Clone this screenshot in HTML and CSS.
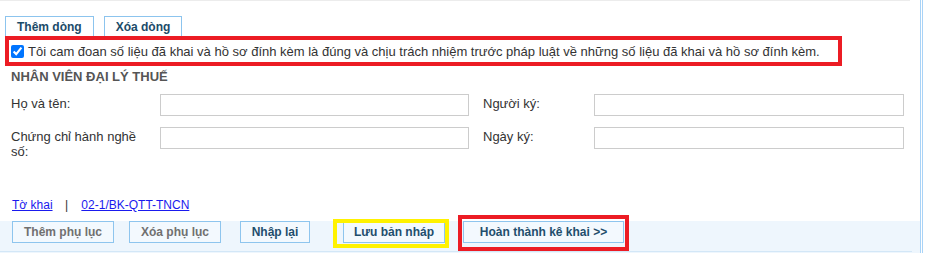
FILE: index.html
```html
<!DOCTYPE html>
<html lang="vi">
<head>
    <meta charset="UTF-8">
    <meta name="viewport" content="width=device-width, initial-scale=1.0">
    <title>Kê khai - Nhân viên đại lý thuế</title>
    <link rel="stylesheet" href="styles.css">
</head>
<body>
    <div class="page">
        <div class="top-rule"></div>

        <!-- Row tools -->
        <div class="tabs">
            <button class="tab">Thêm dòng</button>
            <button class="tab">Xóa dòng</button>
        </div>

        <!-- Pledge -->
        <label class="pledge">
            <input type="checkbox" checked>
            <span>Tôi cam đoan số liệu đã khai và hồ sơ đính kèm là đúng và chịu trách nhiệm trước pháp luật về những số liệu đã khai và hồ sơ đính kèm.</span>
        </label>

        <!-- Tax agent staff -->
        <h3 class="section-title">NHÂN VIÊN ĐẠI LÝ THUẾ</h3>
        <div class="agent-form">
            <label class="field-label">Họ và tên:</label>
            <input class="field-input" type="text">
            <label class="field-label right">Người ký:</label>
            <input class="field-input" type="text">
            <label class="field-label">Chứng chỉ hành nghề số:</label>
            <input class="field-input" type="text">
            <label class="field-label right">Ngày ký:</label>
            <input class="field-input" type="text">
        </div>

        <div class="links">
            <a href="#">Tờ khai</a>
            <span class="sep">|</span>
            <a href="#" class="current">02-1/BK-QTT-TNCN</a>
        </div>

        <!-- Actions -->
        <div class="actions">
            <button class="btn disabled btn-add">Thêm phụ lục</button>
            <button class="btn disabled btn-del">Xóa phụ lục</button>
            <button class="btn btn-reset">Nhập lại</button>
            <button class="btn btn-draft mark-yellow">Lưu bản nháp</button>
            <button class="btn btn-done mark-red">Hoàn thành kê khai &gt;&gt;</button>
        </div>
    </div>
</body>
</html>
```

FILE: styles.css
```css
body {
    margin: 0;
    font-family: "Liberation Sans", Arial, sans-serif;
    font-size: 13px;
    color: #333;
    background-color: #fff;
}
.page {
    width: 920px;
    height: 253px;
    border-right: 3px double #a9d3f7;
    overflow: hidden;
}
.top-rule {
    width: 910px;
    height: 1px;
    background-color: #ececec;
}
.tabs {
    display: flex;
    gap: 10px;
    margin-top: 15px;
    padding-left: 5px;
}
.tab {
    height: 20px;
    padding: 0 11px;
    border: 1px solid #8cc4ee;
    border-bottom: none;
    background-color: #fff;
    font-family: "Liberation Sans", Arial, sans-serif;
    font-size: 12px;
    font-weight: bold;
    color: #1b4b69;
}
.pledge {
    display: flex;
    align-items: center;
    box-sizing: border-box;
    width: 837px;
    height: 30px;
    margin-left: 5px;
    padding-left: 2px;
    border: 4px solid #ec1c24;
    color: #333;
}
.pledge input {
    width: 13px;
    height: 13px;
    margin: 0 4px 0 0;
}
.section-title {
    margin: 3px 0 0 11px;
    font-size: 13px;
    line-height: 16px;
    color: #555;
}
.agent-form {
    display: grid;
    grid-template-columns: 149px 309px 125px 310px;
    grid-auto-rows: 22px;
    row-gap: 11px;
    margin: 9px 0 0 11px;
}
.field-label {
    padding: 2px 8px 0 0;
    line-height: 15px;
    color: #333;
}
.field-label.right {
    padding-left: 14px;
}
.field-input {
    box-sizing: border-box;
    height: 22px;
    margin: 0;
    border: 1px solid #ccc;
    background-color: #fff;
}
.links {
    margin: 49px 0 0 12px;
    font-size: 12px;
    line-height: 14px;
}
.links a {
    color: #1a1aee;
}
.links .sep {
    margin: 0 10px 0 9px;
    color: #333;
}
.actions {
    display: flex;
    align-items: flex-start;
    height: 32px;
    margin-top: 9px;
    padding-left: 12px;
    background: linear-gradient(#d3e7f7, #d3e7f7) 0 30px / 912px 1px no-repeat, #eef6fd;
}
.btn {
    position: relative;
    height: 22px;
    padding: 0;
    border: 1px solid #8ec5ee;
    background-color: #f3f9fe;
    font-family: "Liberation Sans", Arial, sans-serif;
    font-size: 12px;
    font-weight: bold;
    color: #1f4e6d;
}
.btn.disabled {
    color: #707070;
}
.btn-add {
    width: 102px;
}
.btn-del {
    width: 92px;
    margin-left: 15px;
}
.btn-reset {
    width: 70px;
    margin-left: 19px;
}
.btn-draft {
    width: 102px;
    margin-left: 33px;
}
.btn-done {
    width: 161px;
    margin-left: 18px;
}
.mark-yellow::after,
.mark-red::after {
    content: "";
    position: absolute;
    border: 4px solid;
}
.mark-yellow::after {
    top: -3px;
    right: -5px;
    bottom: -6px;
    left: -11px;
    border-color: #fff200;
}
.mark-red::after {
    top: -7px;
    right: -6px;
    bottom: -9px;
    left: -6px;
    border-color: #ec1c24;
}
```
